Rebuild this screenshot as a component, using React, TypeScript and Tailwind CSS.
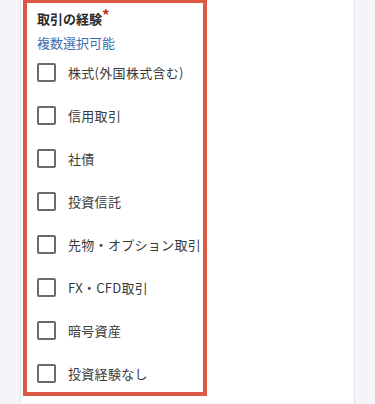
import React from 'react';

const options = [
  '株式(外国株式含む)',
  '信用取引',
  '社債',
  '投資信託',
  '先物・オプション取引',
  'FX・CFD取引',
  '暗号資産',
  '投資経験なし',
];

function CheckRow({ label }: { label: string }) {
  return (
    <label className="flex h-[19px] items-center gap-[12px]">
      <span className="h-[19px] w-[19px] shrink-0 rounded-[2px] border-2 border-[#6a6a6a] bg-white" />
      <span className="whitespace-nowrap text-[13px] leading-none tracking-[0.3px] text-[#3a3a3a]">{label}</span>
    </label>
  );
}

export default function App() {
  return (
    <div
      className="h-[404px] w-[375px] overflow-hidden bg-[#f4f5f9]"
      style={{ fontFamily: '"Noto Sans CJK JP", "Noto Sans", sans-serif' }}
    >
      <div className="ml-[20px] h-full w-[335px] border-x border-[#e4e6ec] bg-white pl-[2px]">
        <div className="-mt-px w-[184px] border-4 border-[#dc5a44] px-[10px] pb-[9px] pt-[7px]">
          <div className="flex h-[16px] items-center text-[13px] font-bold leading-none text-[#2a2a2a]">
            取引の経験
            <span className="-mt-[7px] text-[15px] font-bold text-[#c8281e]">*</span>
          </div>
          <div className="mt-[8px] flex h-[16px] items-center text-[13px] leading-none text-[#3b6db0]">
            複数選択可能
          </div>
          <div className="mt-[13px] flex flex-col gap-[24px]">
            {options.map((o) => (
              <CheckRow key={o} label={o} />
            ))}
          </div>
        </div>
      </div>
    </div>
  );
}
